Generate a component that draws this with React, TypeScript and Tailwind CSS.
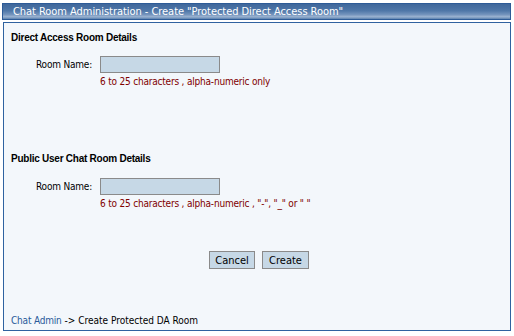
export default function App() {
  const head = { fontFamily: "'DejaVu Sans Condensed', Tahoma, 'DejaVu Sans', sans-serif" };
  const bold = { fontFamily: "'Liberation Sans', Arial, sans-serif" };
  return (
    <div className="w-[514px] h-[336px] bg-white text-[10px] leading-[11px] tracking-[-0.2px] text-black" style={head}>
      <div className="pt-[3px] pl-[2px] pr-[3px]">
        <div className="h-[17px] border border-[#2d5b97] bg-[linear-gradient(to_bottom,#3f679b_0%,#4f77a8_45%,#7393bc_70%,#9bb3d1_85%,#5a80ae_100%)] flex items-center pl-[10px] text-white text-[11px] tracking-[-0.05px] leading-none">
          Chat Room Administration - Create "Protected Direct Access Room"
        </div>
      </div>
      <div className="mt-[2px] ml-[3px] mr-[3px] h-[309px] border border-[#2f62a0] bg-[#f3f7fb] flex flex-col">
        <div className="pl-[7px] pt-[9px] font-bold text-[10px] tracking-[-0.25px]" style={bold}>Direct Access Room Details</div>
        <div className="flex mt-[13px] items-start">
          <div className="w-[96px] text-right pt-[3px] pr-[8px]">Room Name:</div>
          <div className="flex flex-col">
            <div className="w-[120px] h-[17px] border border-[#8a8a8a] bg-[#c6d8e6]" />
            <div className="mt-[3px] text-[#800000]">6 to 25 characters , alpha-numeric only</div>
          </div>
        </div>
        <div className="pl-[7px] mt-[66px] font-bold text-[10px] tracking-[-0.25px]" style={bold}>Public User Chat Room Details</div>
        <div className="flex mt-[14px] items-start">
          <div className="w-[96px] text-right pt-[3px] pr-[8px]">Room Name:</div>
          <div className="flex flex-col">
            <div className="w-[120px] h-[17px] border border-[#8a8a8a] bg-[#c6d8e6]" />
            <div className="mt-[3px] text-[#800000]">6 to 25 characters , alpha-numeric , "-", "_" or " "</div>
          </div>
        </div>
        <div className="flex justify-center gap-[7px] mt-[42px] pl-[4px]">
          <button className="h-[18px] w-[46px] border border-[#8a8a8a] bg-[#c6d8e6] leading-none text-[11px] tracking-normal">Cancel</button>
          <button className="h-[18px] w-[47px] border border-[#8a8a8a] bg-[#c6d8e6] leading-none text-[11px] tracking-normal">Create</button>
        </div>
        <div className="mt-auto pb-[4px] pl-[7px]">
          <span className="text-[#2a5a9a]">Chat Admin</span>
          <span className="ml-[3px] tracking-normal">-&gt; Create Protected DA Room</span>
        </div>
      </div>
    </div>
  );
}
